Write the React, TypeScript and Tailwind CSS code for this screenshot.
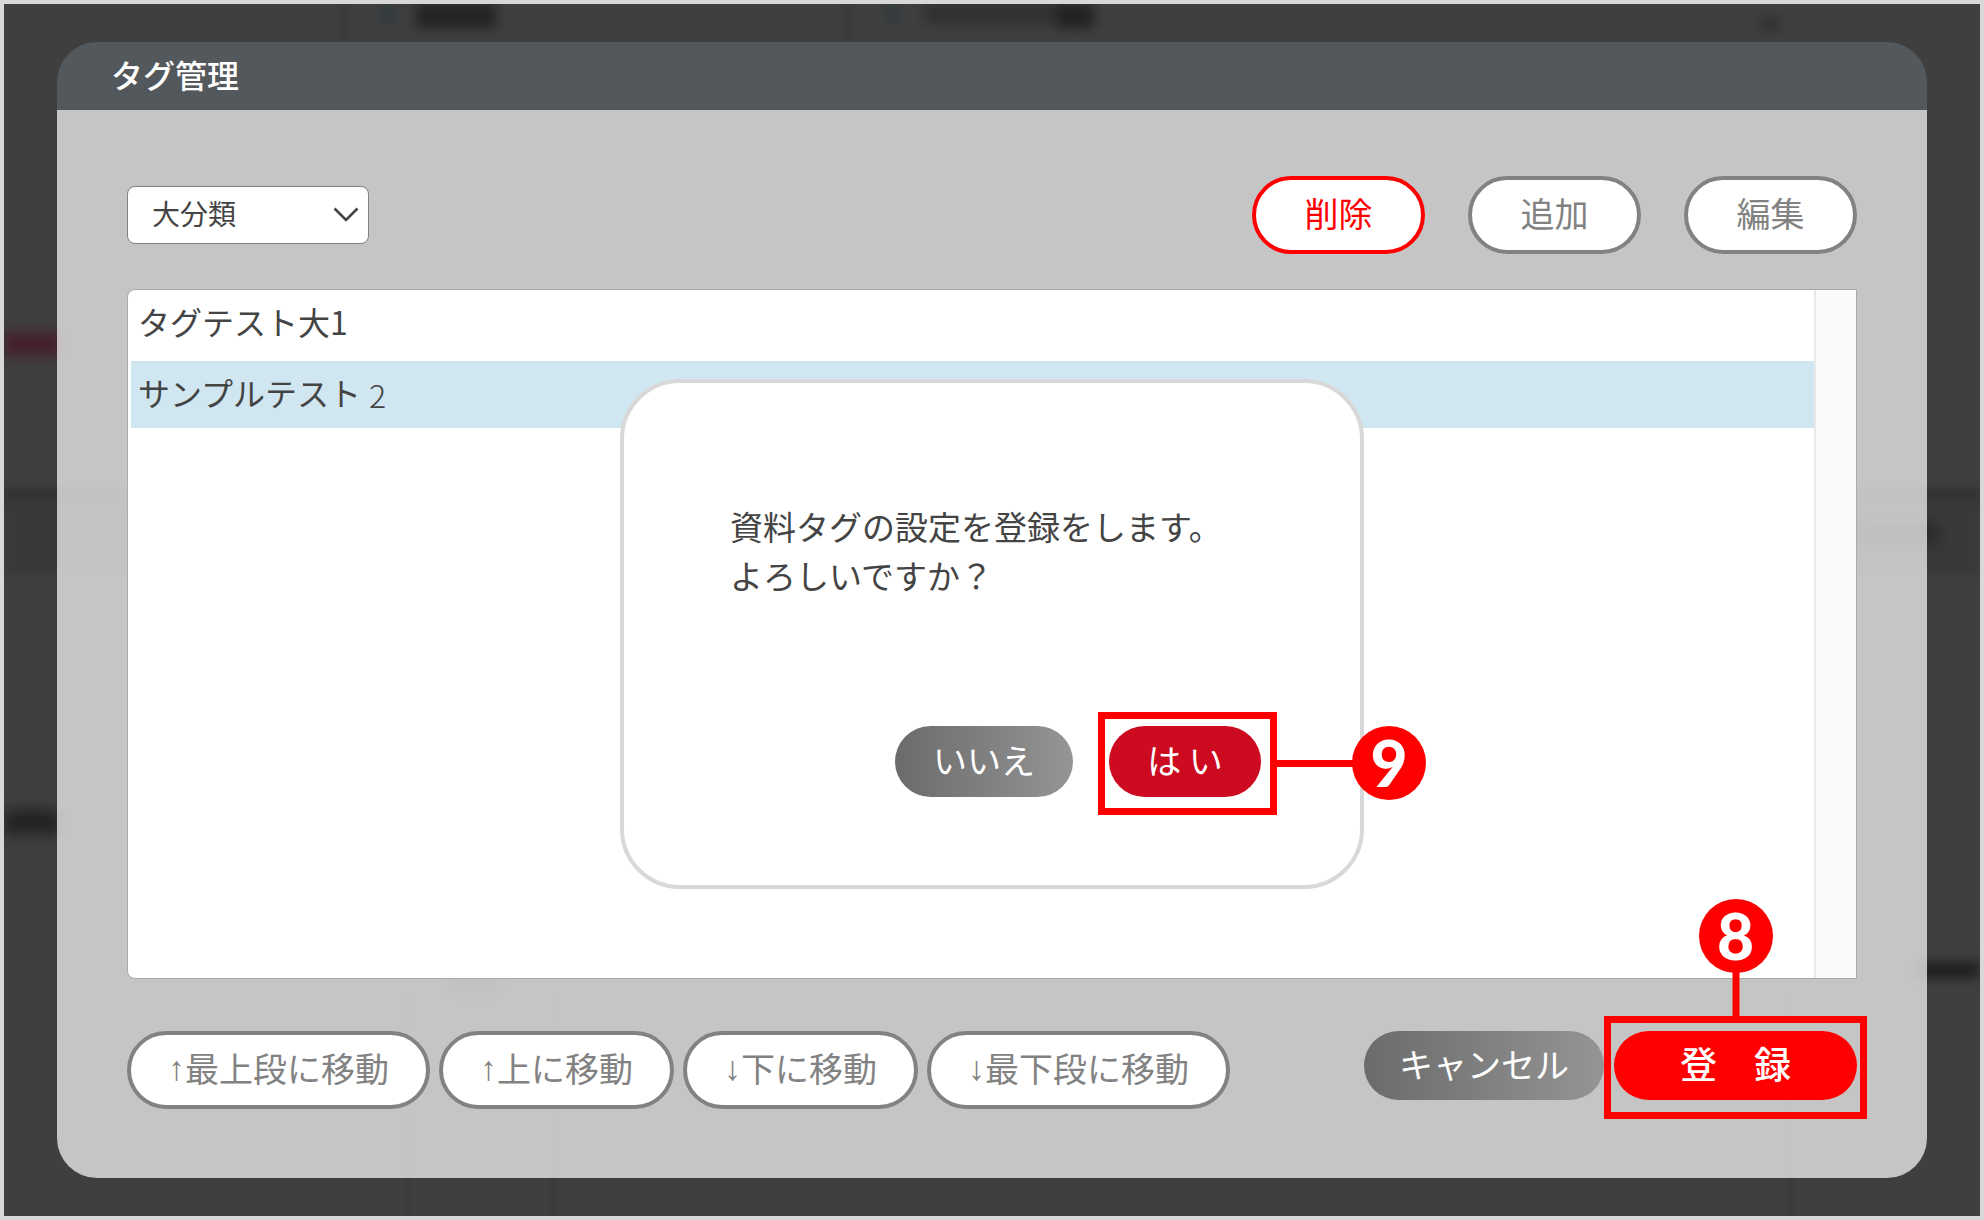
import { useState, type ReactNode } from "react";
import { clsx } from "clsx";

const rows = [
  { id: 1, name: "タグテスト大", no: "1" },
  { id: 2, name: "サンプルテスト", no: "2" },
];

const moveButtons = [
  { arrow: "↑", label: "最上段に移動" },
  { arrow: "↑", label: "上に移動" },
  { arrow: "↓", label: "下に移動" },
  { arrow: "↓", label: "最下段に移動" },
];

// blurred remains of the page behind the overlay
function Backdrop() {
  return (
    <div aria-hidden="true" className="absolute inset-0 overflow-hidden bg-[#3f3f3f]">
      <div className="absolute inset-x-0 top-[490px] h-20 bg-[#393939] blur-[4px]" />
      <div className="absolute inset-x-0 top-[484px] h-3 bg-[#323232] blur-[4px]" />
      <div className="absolute top-0 left-[336px] h-9 w-2 bg-[#393939] blur-[3px]" />
      <div className="absolute top-0 left-[840px] h-9 w-2 bg-[#393939] blur-[3px]" />
      <div className="absolute top-0 left-[376px] h-5 w-4 bg-[#343b3f] blur-[5px]" />
      <div className="absolute top-0 left-[412px] h-6 w-20 bg-[#232323] blur-[6px]" />
      <div className="absolute top-0 left-[882px] h-5 w-4 bg-[#343b3f] blur-[5px]" />
      <div className="absolute top-0 left-[920px] h-5 w-36 bg-[#303030] blur-[6px]" />
      <div className="absolute top-0 left-[1054px] h-6 w-9 bg-[#222222] blur-[6px]" />
      <div className="absolute top-3 left-[1756px] h-4 w-5 bg-[#333333] blur-[5px]" />
      <div className="absolute top-[328px] left-0 h-6 w-14 bg-[#44202a] blur-[6px]" />
      <div className="absolute top-[806px] left-0 h-6 w-14 bg-[#222222] blur-[7px]" />
      <div className="absolute top-[970px] left-[446px] h-5 w-12 bg-[#2c2c2c] blur-[7px]" />
      <div className="absolute top-[520px] right-[42px] h-5 w-20 bg-[#282828] blur-[7px]" />
      <div className="absolute top-[958px] right-0 h-4 w-16 bg-[#1e1e1e] blur-[6px]" />
      <div className="absolute right-[188px] bottom-0 h-56 w-1 bg-[#3a3a3a] blur-[2px]" />
      <div className="absolute bottom-0 left-[402px] h-56 w-1 bg-[#3a3a3a] blur-[2px]" />
      <div className="absolute bottom-0 left-[548px] h-56 w-1 bg-[#3a3a3a] blur-[2px]" />
    </div>
  );
}

function OutlineButton({ children, danger, className }: { children: ReactNode; danger?: boolean; className?: string }) {
  return (
    <button
      type="button"
      className={clsx(
        "flex h-[78px] items-center justify-center rounded-full border-4 bg-white pb-1 text-[34px] leading-none whitespace-nowrap",
        danger ? "border-[#ff0000] text-[#ff0000]" : "border-[#828282] text-[#828282]",
        className
      )}
    >
      {children}
    </button>
  );
}

function Badge({ children, className }: { children: ReactNode; className?: string }) {
  return (
    <span
      className={clsx(
        "absolute flex size-[74px] items-center justify-center rounded-full bg-[#ff0000] font-[Lato,sans-serif] text-[64px] leading-none font-black text-white",
        className
      )}
    >
      {children}
    </span>
  );
}

function ConfirmDialog() {
  return (
    <div
      role="dialog"
      aria-labelledby="confirm-text"
      className="flex min-h-[510px] w-[744px] flex-col rounded-[60px] border-4 border-[#d8d8d8] bg-white pt-[119px] pr-[99px] pb-[88px] pl-[106px]"
    >
      <p id="confirm-text" className="text-[33px] leading-[49px] text-[#444444]">
        資料タグの設定を登録をします。
        <br />
        よろしいですか？
      </p>
      <div className="mt-auto flex justify-end gap-9 text-[34px] leading-none text-white">
        <button
          type="button"
          className="h-[71px] w-[178px] rounded-full bg-linear-to-r from-[#6b6b6b] to-[#959595] pb-1"
        >
          いいえ
        </button>
        <div className="relative">
          <button type="button" className="h-[71px] w-[152px] rounded-full bg-[#cd0b20] pb-1">
            は い
          </button>
          <div className="pointer-events-none absolute -top-3.5 -right-4 -bottom-[18px] -left-[11px] border-7 border-[#ff0000]">
            <span className="absolute top-[41px] left-full h-[7px] w-24 bg-[#ff0000]" />
            <Badge className="top-[7px] left-[247px]">9</Badge>
          </div>
        </div>
      </div>
    </div>
  );
}

export default function App() {
  const [selected, setSelected] = useState(2);

  return (
    <div
      lang="ja"
      className="relative flex min-h-screen flex-col border-4 border-[#d8d8d8] font-['Noto_Sans_CJK_JP',sans-serif]"
    >
      <Backdrop />

      <main className="relative mx-[53px] mt-[38px] mb-[38px] flex flex-1 flex-col overflow-hidden rounded-[40px]">
        <header className="flex h-[68px] items-center bg-[#53585c] pl-[54px]">
          <h1 className="pb-1 text-[32px] leading-none font-medium text-white">タグ管理</h1>
        </header>

        <div className="flex flex-1 flex-col bg-white/70 px-[70px] pt-[66px] pb-[69px]">
          <div className="flex items-center justify-between">
            <div className="relative">
              <select
                aria-label="分類"
                className="h-[58px] w-[242px] appearance-none rounded-lg border border-[#828282] bg-white pb-1 pl-6 text-[28px] text-[#444444]"
              >
                <option>大分類</option>
                <option>中分類</option>
                <option>小分類</option>
              </select>
              <svg
                viewBox="0 0 26 16"
                className="pointer-events-none absolute top-[21px] right-2.5 h-4 w-[26px]"
                fill="none"
                stroke="#444444"
                strokeWidth="2.6"
              >
                <path d="M1.5 1.5 13 13 24.500 1.5" />
              </svg>
            </div>
            <div className="flex gap-[43px]">
              <OutlineButton danger className="w-[173px]">削除</OutlineButton>
              <OutlineButton className="w-[173px]">追加</OutlineButton>
              <OutlineButton className="w-[173px]">編集</OutlineButton>
            </div>
          </div>

          <div className="relative mt-[35px] flex flex-1 rounded-l-lg border border-[#aaaaaa] bg-white">
            <ul className="flex-1 pl-[3px]">
              {rows.map((row) => (
                <li key={row.id} className={row.id === 1 ? "pb-1" : ""}>
                  <button
                    type="button"
                    onClick={() => setSelected(row.id)}
                    className={clsx(
                      "flex h-[67px] w-full items-center pb-1.5 pl-[7px] text-[32px] leading-none text-[#444444]",
                      selected === row.id && "bg-[#d0e7f1]"
                    )}
                  >
                    {row.name}
                    <span className={row.id === 2 ? "pt-1 pl-2 font-light" : ""}>{row.no}</span>
                  </button>
                </li>
              ))}
            </ul>
            <div className="w-[42px] border-l-2 border-[#e8e8e8] bg-[#fafafa]" />

            <div className="absolute inset-0 flex items-center justify-center">
              <ConfirmDialog />
            </div>
          </div>

          <div className="mt-[52px] flex items-start justify-between">
            <div className="flex gap-[9px]">
              {moveButtons.map((b) => (
                <OutlineButton key={b.arrow + b.label} className="px-[37px]">
                  <span className="font-['Liberation_Sans',sans-serif]">{b.arrow}</span>
                  {b.label}
                </OutlineButton>
              ))}
            </div>
            <div className="flex gap-2.5 text-white">
              <button
                type="button"
                className="h-[69px] w-[240px] rounded-full bg-linear-to-r from-[#6b6b6b] to-[#959595] pb-1 text-[34px] leading-none"
              >
                キャンセル
              </button>
              <div className="relative">
                <button
                  type="button"
                  className="h-[69px] w-[243px] rounded-full bg-[#ff0000] pb-1 text-[37px] leading-none font-medium"
                >
                  登　録
                </button>
                <div className="pointer-events-none absolute -inset-x-2.5 -top-[15px] -bottom-[19px] border-7 border-[#ff0000]">
                  <span className="absolute bottom-full left-1/2 h-16 w-[7px] -translate-x-1/2 bg-[#ff0000]" />
                  <Badge className="bottom-[139px] left-1/2 -translate-x-1/2">8</Badge>
                </div>
              </div>
            </div>
          </div>
        </div>
      </main>
    </div>
  );
}
